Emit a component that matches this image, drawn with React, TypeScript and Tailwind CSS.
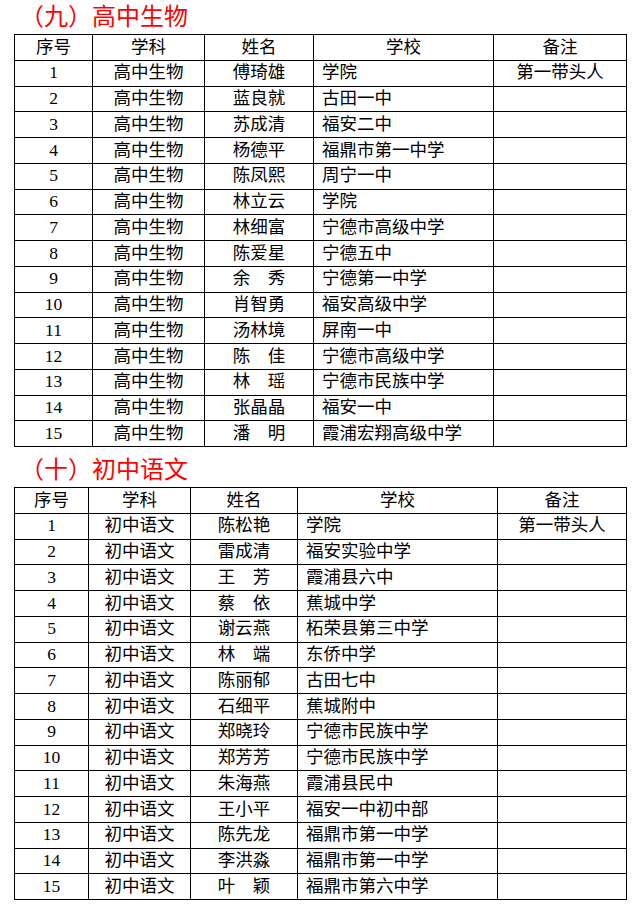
import React from "react";

type Row = { no: number; subject: string; name: string; school: string; note?: string };

const bio: Row[] = [
  { no: 1, subject: "高中生物", name: "傅琦雄", school: "学院", note: "第一带头人" },
  { no: 2, subject: "高中生物", name: "蓝良就", school: "古田一中" },
  { no: 3, subject: "高中生物", name: "苏成清", school: "福安二中" },
  { no: 4, subject: "高中生物", name: "杨德平", school: "福鼎市第一中学" },
  { no: 5, subject: "高中生物", name: "陈凤熙", school: "周宁一中" },
  { no: 6, subject: "高中生物", name: "林立云", school: "学院" },
  { no: 7, subject: "高中生物", name: "林细富", school: "宁德市高级中学" },
  { no: 8, subject: "高中生物", name: "陈爱星", school: "宁德五中" },
  { no: 9, subject: "高中生物", name: "余　秀", school: "宁德第一中学" },
  { no: 10, subject: "高中生物", name: "肖智勇", school: "福安高级中学" },
  { no: 11, subject: "高中生物", name: "汤林境", school: "屏南一中" },
  { no: 12, subject: "高中生物", name: "陈　佳", school: "宁德市高级中学" },
  { no: 13, subject: "高中生物", name: "林　瑶", school: "宁德市民族中学" },
  { no: 14, subject: "高中生物", name: "张晶晶", school: "福安一中" },
  { no: 15, subject: "高中生物", name: "潘　明", school: "霞浦宏翔高级中学" },
];

const chinese: Row[] = [
  { no: 1, subject: "初中语文", name: "陈松艳", school: "学院", note: "第一带头人" },
  { no: 2, subject: "初中语文", name: "雷成清", school: "福安实验中学" },
  { no: 3, subject: "初中语文", name: "王　芳", school: "霞浦县六中" },
  { no: 4, subject: "初中语文", name: "蔡　依", school: "蕉城中学" },
  { no: 5, subject: "初中语文", name: "谢云燕", school: "柘荣县第三中学" },
  { no: 6, subject: "初中语文", name: "林　端", school: "东侨中学" },
  { no: 7, subject: "初中语文", name: "陈丽郁", school: "古田七中" },
  { no: 8, subject: "初中语文", name: "石细平", school: "蕉城附中" },
  { no: 9, subject: "初中语文", name: "郑晓玲", school: "宁德市民族中学" },
  { no: 10, subject: "初中语文", name: "郑芳芳", school: "宁德市民族中学" },
  { no: 11, subject: "初中语文", name: "朱海燕", school: "霞浦县民中" },
  { no: 12, subject: "初中语文", name: "王小平", school: "福安一中初中部" },
  { no: 13, subject: "初中语文", name: "陈先龙", school: "福鼎市第一中学" },
  { no: 14, subject: "初中语文", name: "李洪淼", school: "福鼎市第一中学" },
  { no: 15, subject: "初中语文", name: "叶　颖", school: "福鼎市第六中学" },
];

const cell = "border border-black p-0 leading-none";

const Section = ({
  title,
  rows,
  cols,
  first,
}: {
  title: string;
  rows: Row[];
  cols: string[];
  first?: boolean;
}) => (
  <div className={first ? "" : "mt-[6px]"}>
    <h2 className="h-[34px] flex items-center pl-[20px] text-[24px] font-normal text-[#ff0000] leading-none">
      {title}
    </h2>
    <table className="ml-[14px] w-[612px] table-fixed border-collapse text-[17.5px] text-black">
      <colgroup>
        {cols.map((c, i) => (
          <col key={i} className={c} />
        ))}
      </colgroup>
      <thead>
        <tr className="h-[25.75px]">
          <th className={`${cell} font-normal text-center`}>序号</th>
          <th className={`${cell} font-normal text-center`}>学科</th>
          <th className={`${cell} font-normal text-center`}>姓名</th>
          <th className={`${cell} font-normal text-center`}>学校</th>
          <th className={`${cell} font-normal text-center`}>备注</th>
        </tr>
      </thead>
      <tbody>
        {rows.map((r) => (
          <tr key={r.no} className="h-[25.75px]">
            <td className={`${cell} text-center`}>{r.no}</td>
            <td className={`${cell} text-center`}>{r.subject}</td>
            <td className={`${cell} text-center whitespace-pre`}>{r.name}</td>
            <td className={`${cell} text-left pl-[8px]`}>{r.school}</td>
            <td className={`${cell} text-center`}>{r.note ?? ""}</td>
          </tr>
        ))}
      </tbody>
    </table>
  </div>
);

export default function App() {
  return (
    <div
      className="w-[640px] h-[904px] bg-white overflow-hidden"
      style={{ fontFamily: '"Liberation Serif", "Noto Sans CJK SC", serif' }}
    >
      <Section
        first
        title="（九）高中生物"
        rows={bio}
        cols={["w-[78px]", "w-[112px]", "w-[109px]", "w-[180px]", "w-[133px]"]}
      />
      <Section
        title="（十）初中语文"
        rows={chinese}
        cols={["w-[74px]", "w-[102px]", "w-[107px]", "w-[200px]", "w-[129px]"]}
      />
    </div>
  );
}
